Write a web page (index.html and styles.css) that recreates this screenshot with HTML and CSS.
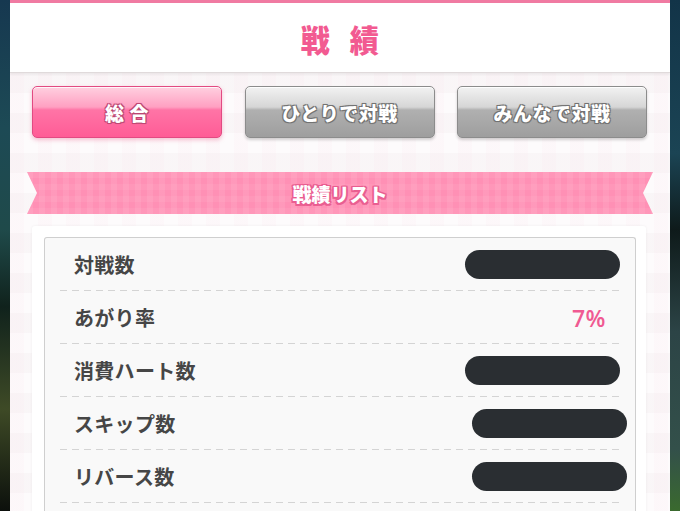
FILE: index.html
```html
<!DOCTYPE html>
<html lang="ja">
<head>
<meta charset="utf-8">
<link rel="stylesheet" href="styles.css">
</head>
<body>
<div class="frame">
  <div class="side side-left"></div>
  <main class="main">
    <div class="topbar"></div>
    <header class="header"><h1 class="title">戦 績</h1></header>
    <section class="content">
      <nav class="tabs">
        <button class="tab tab-active">総 合</button>
        <button class="tab">ひとりで対戦</button>
        <button class="tab">みんなで対戦</button>
      </nav>
      <div class="ribbon"><span class="ribbon-text">戦績リスト</span></div>
      <div class="card">
        <div class="list">
          <div class="row"><span class="label">対戦数</span><span class="pill"></span></div>
          <div class="row"><span class="label">あがり率</span><span class="value">7%</span></div>
          <div class="row"><span class="label">消費ハート数</span><span class="pill"></span></div>
          <div class="row"><span class="label">スキップ数</span><span class="pill pill-shift"></span></div>
          <div class="row"><span class="label">リバース数</span><span class="pill pill-shift"></span></div>
        </div>
      </div>
    </section>
  </main>
  <div class="side side-right"></div>
</div>
</body>
</html>
```
FILE: styles.css
```css
* { box-sizing: border-box; }
html, body { margin: 0; padding: 0; height: 100%; overflow: hidden; }
body { font-family: "Noto Sans CJK JP", "Noto Sans", sans-serif; background: #1a3340; }

.frame { display: flex; height: 511px; width: 680px; }
.side { width: 10px; flex: none; }
.side-left { background: linear-gradient(180deg, #163850 0%, #1d4a55 25%, #1f4a4a 45%, #10221c 60%, #3e4a26 80%, #0c100c 100%); }
.side-right { background: linear-gradient(180deg, #123448 0%, #1b4454 30%, #0e1a1a 45%, #2c4446 65%, #33504a 88%, #3a6a2e 100%); }

.main { width: 660px; flex: none; display: flex; flex-direction: column; background: #fbf8f9; overflow: hidden; }
.topbar { height: 3px; flex: none; background: #f07aa2; }
.header { height: 70px; flex: none; background: #ffffff; display: flex; align-items: center; justify-content: center; border-bottom: 1px solid #e0dadb; box-shadow: 0 2px 2px rgba(0,0,0,0.05); position: relative; z-index: 1; }
.title { margin: 0; font-size: 31px; font-weight: 900; color: #f25a91; letter-spacing: 7px; margin-right: -7px; line-height: 1; padding-top: 2px; transform: scaleX(0.94); }

.content {
  flex: 1;
  display: flex; flex-direction: column;
  padding-top: 13px;
  background:
    repeating-linear-gradient(90deg, rgba(250,215,228,0.10) 0 14px, rgba(255,255,255,0) 14px 28px),
    repeating-linear-gradient(180deg, rgba(235,225,228,0.20) 0 20px, rgba(255,255,255,0) 20px 40px),
    #fdfbfc;
}

.tabs { flex: none; display: grid; grid-template-columns: repeat(3, 190px); justify-content: space-between; padding: 0 23px 0 22px; }
.tab {
  height: 52px; border-radius: 5px; font-family: inherit; font-size: 19px; font-weight: 900; color: #fff; letter-spacing: 0.5px;
  border: 1px solid #8c8c8c;
  background: linear-gradient(180deg, #f2f2f2 0%, #d6d6d6 40%, #b0b0b0 46%, #9e9e9e 100%);
  text-shadow: 0 0 2px #666, 1px 1px 0 #777, -1px -1px 0 #777, 1px -1px 0 #777, -1px 1px 0 #777;
  box-shadow: 0 2px 3px rgba(0,0,0,0.18), inset 0 1px 0 rgba(255,255,255,0.9);
  padding: 0; cursor: pointer;
}
.tab-active {
  border-color: #e24a82;
  background: linear-gradient(180deg, #ffd0e0 0%, #ffa0c2 40%, #ff74a6 46%, #ff5c96 100%);
  text-shadow: 0 0 2px #b0406a, 1px 1px 0 #c24a76, -1px -1px 0 #c24a76, 1px -1px 0 #c24a76, -1px 1px 0 #c24a76;
  box-shadow: 0 2px 4px rgba(230,80,130,0.35), inset 0 1px 0 rgba(255,255,255,0.8);
}

.ribbon {
  flex: none;
  margin: 34px 17px 0 17px; height: 42px;
  display: flex; align-items: center; justify-content: center;
  background:
    repeating-linear-gradient(90deg, rgba(255,255,255,0.08) 0 6px, rgba(255,255,255,0) 6px 12px),
    repeating-linear-gradient(180deg, rgba(255,255,255,0.06) 0 6px, rgba(255,255,255,0) 6px 12px),
    #ff90b5;
  clip-path: polygon(0 0, 100% 0, calc(100% - 10px) 50%, 100% 100%, 0 100%, 10px 50%);
}
.ribbon-text {
  font-size: 19px; font-weight: 900; color: #fff;
  text-shadow: 0 0 2px #e85a8e, 1.5px 1.5px 0 #ea5f92, -1.5px -1.5px 0 #ea5f92, 1.5px -1.5px 0 #ea5f92, -1.5px 1.5px 0 #ea5f92, 0 1.5px 0 #ea5f92, 0 -1.5px 0 #ea5f92, 1.5px 0 0 #ea5f92, -1.5px 0 0 #ea5f92;
}

.card { flex: 1; margin: 12px 24px 0 22px; background: #ffffff; padding: 11px 10px 0 12px; border-radius: 3px 3px 0 0; box-shadow: 0 0 3px rgba(0,0,0,0.06); }
.list { background: #f9f9f9; border: 1px solid #cfcfcf; border-bottom: none; border-radius: 3px 3px 0 0; padding: 0 15px; height: 300px; }
.row {
  height: 53px; display: flex; align-items: center; justify-content: space-between;
  padding-left: 14px;
  background-image: linear-gradient(90deg, #d4d4d4 0 7px, transparent 7px 12px);
  background-size: 12px 1px; background-repeat: repeat-x; background-position: 0 100%;
}
.label { font-size: 20px; font-weight: 700; color: #464646; letter-spacing: 0.3px; padding-bottom: 1px; }
.pill { width: 155px; height: 29px; border-radius: 15px; background: #2a2e32; }
.pill-shift { margin-right: -7px; }
.value { font-family: "Open Sans", "Noto Sans", sans-serif; font-size: 23px; font-weight: 600; color: #f05a92; padding-right: 14px; letter-spacing: 0.5px; }
```
